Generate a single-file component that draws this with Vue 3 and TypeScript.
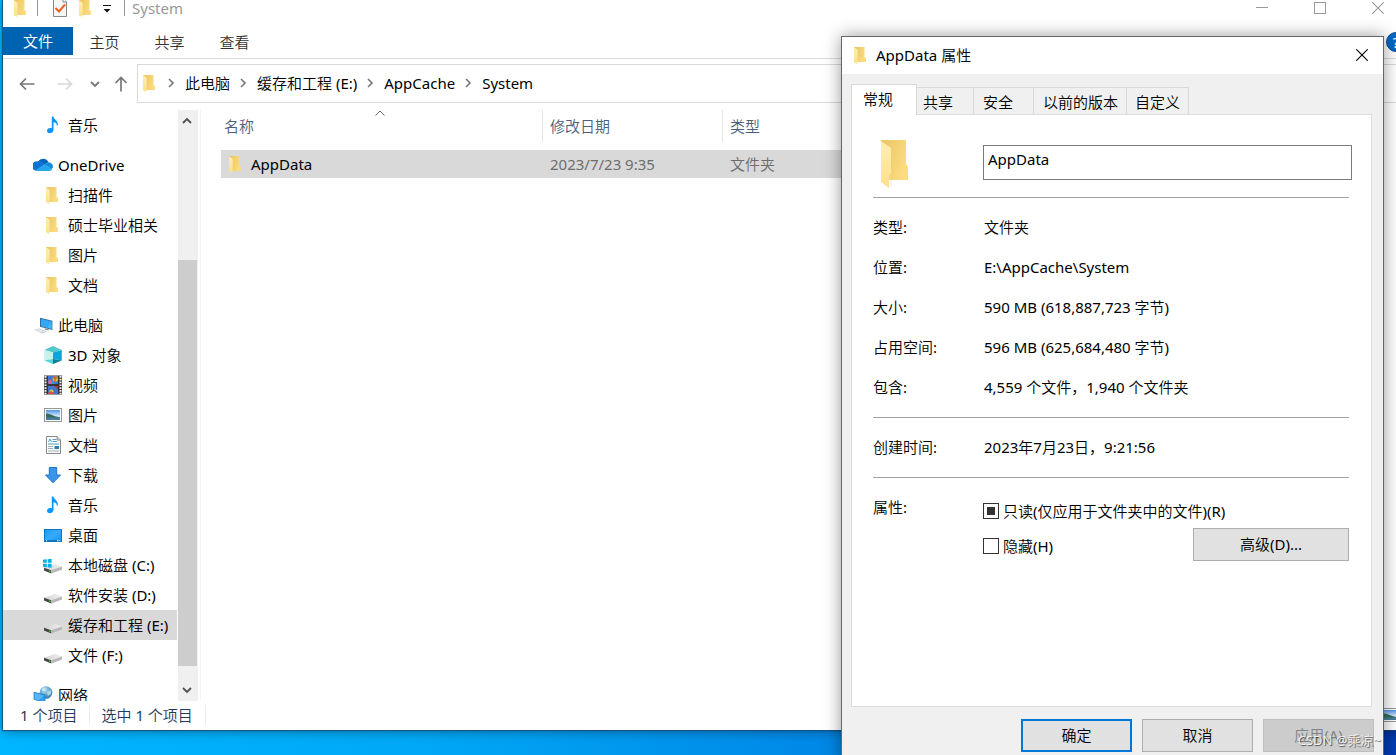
<script setup lang="ts">
import { ref } from 'vue'

interface TreeItem {
  label: string
  icon: string
  root?: boolean
  selected?: boolean
}

const groups: TreeItem[][] = [
  [{ label: '音乐', icon: 'music' }],
  [
    { label: 'OneDrive', icon: 'cloud', root: true },
    { label: '扫描件', icon: 'folder' },
    { label: '硕士毕业相关', icon: 'folder' },
    { label: '图片', icon: 'folder' },
    { label: '文档', icon: 'folder' },
  ],
  [
    { label: '此电脑', icon: 'pc', root: true },
    { label: '3D 对象', icon: 'cube' },
    { label: '视频', icon: 'film' },
    { label: '图片', icon: 'picture' },
    { label: '文档', icon: 'document' },
    { label: '下载', icon: 'download' },
    { label: '音乐', icon: 'music' },
    { label: '桌面', icon: 'desktop' },
    { label: '本地磁盘 (C:)', icon: 'sysdisk' },
    { label: '软件安装 (D:)', icon: 'disk' },
    { label: '缓存和工程 (E:)', icon: 'disk', selected: true },
    { label: '文件 (F:)', icon: 'disk' },
  ],
  [{ label: '网络', icon: 'network', root: true }],
]

const crumbs = ['此电脑', '缓存和工程 (E:)', 'AppCache', 'System']
const ribbon = ['主页', '共享', '查看']
const tabs = ['常规', '共享', '安全', '以前的版本', '自定义']

const facts = [
  { term: '类型:', value: '文件夹' },
  { term: '位置:', value: 'E:\\AppCache\\System' },
  { term: '大小:', value: '590 MB (618,887,723 字节)' },
  { term: '占用空间:', value: '596 MB (625,684,480 字节)' },
  { term: '包含:', value: '4,559 个文件，1,940 个文件夹' },
]

const folderName = ref('AppData')
const hidden = ref(false)
</script>

<template>
  <div class="screen">
    <svg class="sprite" aria-hidden="true">
      <defs>
        <linearGradient id="gBack" x1="0" x2="1" y1="0" y2="0.4">
          <stop offset="0" stop-color="#e9c463" />
          <stop offset="1" stop-color="#fbdc80" />
        </linearGradient>
        <linearGradient id="gFlap" x1="0" x2="0" y1="0" y2="1">
          <stop offset="0" stop-color="#ffeeb5" />
          <stop offset="1" stop-color="#ffe08a" />
        </linearGradient>
        <linearGradient id="gScreen" x1="0" x2="1" y1="0" y2="1">
          <stop offset="0" stop-color="#1c9bf3" />
          <stop offset="0.5" stop-color="#36abfa" />
          <stop offset="1" stop-color="#1593ee" />
        </linearGradient>
        <linearGradient id="gSky" x1="0" x2="0" y1="0" y2="1">
          <stop offset="0" stop-color="#4f93e8" />
          <stop offset="0.6" stop-color="#d5ecfa" />
          <stop offset="1" stop-color="#7fb2cf" />
        </linearGradient>
        <linearGradient id="gDisk" x1="0" x2="1" y1="0" y2="0">
          <stop offset="0" stop-color="#d3d3d5" />
          <stop offset="1" stop-color="#f0f0f1" />
        </linearGradient>
        <radialGradient id="gGlobe" cx="0.4" cy="0.3" r="0.8">
          <stop offset="0" stop-color="#b9dff1" />
          <stop offset="0.6" stop-color="#4f9cc9" />
          <stop offset="1" stop-color="#2e6d9d" />
        </radialGradient>
      </defs>
      <symbol id="folder" viewBox="0 0 20 20">
        <path d="M3 2H13.5V12L15 13V17H6L3 16Z" fill="url(#gBack)" />
        <path d="M3 2.3L6.7 5V16L6 19L3 17.3Z" fill="url(#gFlap)" />
      </symbol>
      <symbol id="bigfolder" viewBox="0 0 32 50">
        <path d="M2 1H27V25L29 28V41H10L2 40Z" fill="url(#gBack)" />
        <path d="M2 2L12 9V35L10 37V49L2 43Z" fill="url(#gFlap)" />
        <path d="M10 49L12 46V36" fill="none" stroke="#f1d99a" stroke-width="1" opacity=".5" />
      </symbol>
      <symbol id="music" viewBox="0 0 20 20">
        <path d="M8.8 1.5H10.5C10.8 5 15.5 5.3 14.8 10.5H13.7C14 8 12 7.6 10.5 7.3V14.8C10.5 17 8.6 18.2 6.8 18.2C5.1 18.2 4 17.2 4 15.8C4 13.8 6.2 12.5 8.8 13.3Z" fill="#0b95f8" />
      </symbol>
      <symbol id="cloud" viewBox="0 0 20 20">
        <path d="M5 6.5A6 6 0 0 1 15.5 7L10 11Z" fill="#0765b7" />
        <path d="M2.5 15.5A4.6 4.6 0 0 1 4.8 6.4C6.3 5.7 8 6.2 9.3 7L13 9.3L3 16Z" fill="#0c74d0" />
        <path d="M12 9L15.3 7.2A4.5 4.5 0 0 1 19.7 13L15 14Z" fill="#1789d8" />
        <path d="M2.3 15.2L11.3 9.2L19.4 13.5C18.9 15.2 17.7 16 16 16H4.5C3.6 16 2.9 15.7 2.3 15.2Z" fill="#27a5ec" />
      </symbol>
      <symbol id="pc" viewBox="0 0 20 20">
        <path d="M7 2.8L19.4 5.7V15L7 11.7Z" fill="#356b98" />
        <path d="M8 4L18.7 6.5V14L8 11Z" fill="#45b6fb" />
        <path d="M8 4L18.7 6.5L14 12.5L8 11Z" fill="#2699ec" opacity=".55" />
        <path d="M1 14.8L6.2 13.5L14.5 16.4L9.2 18.4Z" fill="#c4cbd3" />
        <path d="M2.7 14.8L10.2 17.2M4.5 14.2L12 16.7M5.5 16.5L9 14.7" stroke="#f2f4f6" stroke-width=".7" />
        <path d="M12 13.2L15.7 14.2V15.5L11.4 14.6Z" fill="#81909c" />
      </symbol>
      <symbol id="cube" viewBox="0 0 20 20">
        <path d="M1.2 5L10 1L18.8 5L10 7.5Z" fill="#51c8cc" />
        <path d="M1.2 5L10 7.5V14L1.2 15.5Z" fill="#c5f1f1" />
        <path d="M18.8 5L10 7.5V14L18.8 15.5Z" fill="#0aa8d7" />
        <path d="M1.2 15.5L10 14V19Z" fill="#53d5d7" />
        <path d="M18.8 15.5L10 14V19Z" fill="#087d9c" />
      </symbol>
      <symbol id="film" viewBox="0 0 20 20">
        <rect x="1" y="0.5" width="18" height="19" fill="#393533" />
        <path d="M2.5 1V19M17.5 1V19" stroke="#f5f1ec" stroke-width="2" stroke-dasharray="1.7 1.1" />
        <path d="M5 1H15V9H5ZM5 11H15V19H5Z" fill="#3e77d3" />
        <circle cx="12.3" cy="4" r="2.8" fill="#d8bd24" />
        <path d="M10 3H14.5M12 1V7" stroke="#cc4934" stroke-width="1" />
        <circle cx="7.2" cy="7" r="2" fill="#ed619a" />
        <path d="M8 9L10 6L12 9Z" fill="#2da5aa" />
        <path d="M11 11H15V15Z" fill="#b63630" />
        <circle cx="8.5" cy="16.5" r="2" fill="#e6cc32" />
        <path d="M5 18L8 16L12 19H5Z" fill="#d85245" />
      </symbol>
      <symbol id="picture" viewBox="0 0 20 20">
        <rect x="1.5" y="3.5" width="17" height="13" fill="#fff" stroke="#969696" />
        <rect x="3" y="5" width="14" height="10" fill="url(#gSky)" />
        <path d="M3 8.5C6 8 8.5 10.5 17 12.5V13H3Z" fill="#376c59" />
        <path d="M3 12.5H17V15H3Z" fill="#477e9c" />
      </symbol>
      <symbol id="document" viewBox="0 0 20 20">
        <path d="M3.5 1.5H14L17.5 5V18.5H3.5Z" fill="#fbfbfb" stroke="#888" />
        <path d="M14 1.5V5H17.5" fill="#d6d6d6" stroke="#888" />
        <path d="M5.5 7L7 4L8.5 7M9.5 4.5H13M9.5 6.5H14" fill="none" stroke="#3b97cd" stroke-width=".9" />
        <path d="M5 9H16" stroke="#4c9fb4" stroke-width="1" />
        <path d="M5 11.5H10M5 13.5H10M5 16H16" stroke="#9fb0b6" stroke-width="1" />
        <rect x="11.5" y="11" width="4.5" height="3" fill="#287fb6" />
      </symbol>
      <symbol id="download" viewBox="0 0 20 20">
        <path d="M6.3 2.5H13.7V10H17.5L10 17.8L2.5 10H6.3Z" fill="#3995ea" stroke="#2076c7" />
      </symbol>
      <symbol id="desktop" viewBox="0 0 20 20">
        <rect x="1.5" y="4.5" width="17" height="12" fill="url(#gScreen)" stroke="#1177bd" />
        <path d="M2 15.7H18" stroke="#0b69ad" stroke-width="1" />
        <path d="M3 15.7H4M14 15.7H15.5M16.3 15.7H17.3" stroke="#fff" stroke-width="1" />
      </symbol>
      <symbol id="disk" viewBox="0 0 20 20">
        <path d="M1 12.8L12 9L19 11.6L8.3 15.5Z" fill="url(#gDisk)" />
        <path d="M1 12.8L8.3 15.3V18.4L1 15.6Z" fill="#454545" />
        <path d="M8.3 15.3L19 11.6V14.6L8.3 18.4Z" fill="#b7b7ba" />
        <path d="M6.1 15.3L7.5 15.8V17L6.1 16.5Z" fill="#37e145" />
      </symbol>
      <symbol id="sysdisk" viewBox="0 0 20 20">
        <use href="#disk" width="20" height="20" />
        <path d="M0 4.8L3.8 4.3V7.8H0ZM4.7 4.2L8.6 3.7V7.8H4.7ZM0 8.7H3.8V12.2L0 11.7ZM4.7 8.7H8.6V12.8L4.7 12.3Z" fill="#08afe8" />
      </symbol>
      <symbol id="network" viewBox="0 0 20 20">
        <circle cx="13" cy="7.5" r="6.3" fill="url(#gGlobe)" />
        <path d="M9 4C11 1 14 3 12 5C10 8 9 5 9 4ZM14 7L18 5V9L15 11Z" fill="#d8eff8" opacity=".65" />
        <path d="M1 7.3L12 10V17.5L1 14.3Z" fill="#2f9eef" stroke="#2576b5" stroke-width=".8" />
        <path d="M1.5 8L11 10.4L6 15.2L1.5 14Z" fill="#67c6ff" opacity=".65" />
      </symbol>
      <symbol id="right" viewBox="0 0 10 10">
        <path d="M3 1L7 5L3 9" fill="none" stroke="#767676" stroke-width="1.6" />
      </symbol>
      <symbol id="up" viewBox="0 0 10 10">
        <path d="M1 7L5 3L9 7" fill="none" stroke="currentColor" stroke-width="1.8" />
      </symbol>
      <symbol id="down" viewBox="0 0 10 10">
        <path d="M1 3L5 7L9 3" fill="none" stroke="currentColor" stroke-width="1.8" />
      </symbol>
      <symbol id="close" viewBox="0 0 12 12">
        <path d="M0.3 0.3L11.7 11.7M11.7 0.3L0.3 11.7" fill="none" stroke="currentColor" stroke-width="1.1" />
      </symbol>
    </svg>

    <main class="explorer">
      <header class="titlebar">
        <svg class="icon"><use href="#folder" /></svg>
        <span class="divider"></span>
        <button class="quick" aria-label="属性">
          <svg width="20" height="20" viewBox="0 0 20 20">
            <path d="M3.5 0.5H13L16.5 4V18.5H3.5Z" fill="#f6f6f6" stroke="#85878b" />
            <path d="M13 0.5V4H16.5" fill="#fff" stroke="#85878b" />
            <path d="M5.5 10L9 13.5L15 6.5" fill="none" stroke="#ee6022" stroke-width="2" />
          </svg>
        </button>
        <button class="quick" aria-label="新建文件夹"><svg class="icon"><use href="#folder" /></svg></button>
        <button class="quick menu" aria-label="自定义快速访问工具栏">
          <svg width="10" height="10" viewBox="0 0 10 10"><path d="M1 2.5H9" stroke="#111" /><path d="M1.5 6H8.5L5 9.5Z" fill="#111" /></svg>
        </button>
        <span class="divider"></span>
        <span class="caption">System</span>
        <div class="controls">
          <button aria-label="最小化"><svg width="12" height="12" viewBox="0 0 12 12"><path d="M0 5.5H12" stroke="currentColor" /></svg></button>
          <button aria-label="最大化"><svg width="12" height="12" viewBox="0 0 12 12"><rect x="0.5" y="0.5" width="11" height="11" fill="none" stroke="currentColor" /></svg></button>
          <button aria-label="关闭"><svg width="12" height="12"><use href="#close" /></svg></button>
        </div>
      </header>

      <nav class="ribbon">
        <button class="file">文件</button>
        <button v-for="name in ribbon" :key="name">{{ name }}</button>
        <button class="help" aria-label="帮助">?</button>
      </nav>

      <div class="navrow">
        <div class="arrows">
          <button aria-label="后退">
            <svg width="16" height="16" viewBox="0 0 16 16"><path d="M15.5 8H1.5M7 2.5L1.5 8L7 13.5" fill="none" stroke="#777" stroke-width="1.7" /></svg>
          </button>
          <button aria-label="前进">
            <svg width="16" height="16" viewBox="0 0 16 16"><path d="M0.5 8H14.5M9 2.5L14.5 8L9 13.5" fill="none" stroke="#d8d8d8" stroke-width="1.7" /></svg>
          </button>
          <button class="slim" aria-label="最近浏览的位置"><svg width="10" height="10"><use href="#down" /></svg></button>
          <button class="slim" aria-label="上移">
            <svg width="16" height="16" viewBox="0 0 16 16"><path d="M8 15.5V1.5M2.5 7L8 1.5L13.5 7" fill="none" stroke="#777" stroke-width="1.7" /></svg>
          </button>
        </div>
        <div class="address">
          <svg class="icon"><use href="#folder" /></svg>
          <template v-for="crumb in crumbs" :key="crumb">
            <svg class="chevron"><use href="#right" /></svg>
            <a href="#">{{ crumb }}</a>
          </template>
        </div>
      </div>

      <div class="content">
        <aside class="tree">
          <ul v-for="(group, g) in groups" :key="g">
            <li v-for="item in group" :key="item.label">
              <a href="#" :class="{ root: item.root, selected: item.selected }">
                <svg class="icon"><use :href="'#' + item.icon" /></svg>
                <span>{{ item.label }}</span>
              </a>
            </li>
          </ul>
        </aside>
        <div class="scrollbar">
          <button aria-label="向上滚动"><svg width="10" height="10"><use href="#up" /></svg></button>
          <div class="track"><div class="thumb"></div></div>
          <button aria-label="向下滚动"><svg width="10" height="10"><use href="#down" /></svg></button>
        </div>
        <section class="files">
          <table>
            <thead>
              <tr>
                <th class="name">
                  名称
                  <svg class="sort" viewBox="0 0 10 6"><path d="M0.5 5.5L5 1L9.5 5.5" fill="none" stroke="#666" /></svg>
                </th>
                <th class="date">修改日期</th>
                <th>类型</th>
              </tr>
            </thead>
            <tbody>
              <tr>
                <td class="name"><div class="entry"><svg class="icon"><use href="#folder" /></svg>AppData</div></td>
                <td>2023/7/23 9:35</td>
                <td>文件夹</td>
              </tr>
            </tbody>
          </table>
        </section>
      </div>

      <footer class="status">
        <span>1 个项目</span>
        <span>选中 1 个项目</span>
        <button aria-label="大图标"><svg class="icon"><use href="#picture" /></svg></button>
      </footer>
    </main>

    <section class="dialog" role="dialog" aria-label="AppData 属性">
      <header class="dialog-title">
        <svg class="icon"><use href="#folder" /></svg>
        <span>AppData 属性</span>
        <button aria-label="关闭"><svg width="12" height="12"><use href="#close" /></svg></button>
      </header>

      <div class="dialog-body">
        <div class="tabs" role="tablist">
          <button v-for="(tab, i) in tabs" :key="tab" role="tab" :aria-selected="i === 0" :class="{ active: i === 0 }">{{ tab }}</button>
        </div>
        <div class="page" role="tabpanel">
          <div class="row naming">
            <svg class="bigfolder"><use href="#bigfolder" /></svg>
            <input v-model="folderName" type="text" aria-label="名称" />
          </div>
          <dl>
            <div v-for="fact in facts" :key="fact.term" class="row">
              <dt>{{ fact.term }}</dt>
              <dd>{{ fact.value }}</dd>
            </div>
          </dl>
          <dl>
            <div class="row">
              <dt>创建时间:</dt>
              <dd>2023年7月23日，9:21:56</dd>
            </div>
          </dl>
          <div class="row attributes">
            <span class="term">属性:</span>
            <div class="options">
              <label><input type="checkbox" :indeterminate.prop="true" />只读(仅应用于文件夹中的文件)(R)</label>
              <div class="pair">
                <label><input v-model="hidden" type="checkbox" />隐藏(H)</label>
                <button class="push advanced">高级(D)...</button>
              </div>
            </div>
          </div>
        </div>
        <footer class="actions">
          <button class="push primary">确定</button>
          <button class="push">取消</button>
          <button class="push" disabled>应用(A)</button>
        </footer>
      </div>
    </section>

    <span class="watermark">CSDN @乘凉~</span>
  </div>
</template>

<style>
body {
  margin: 0;
}
</style>

<style scoped>
* {
  box-sizing: border-box;
}

.screen {
  position: relative;
  display: flex;
  height: 100vh;
  padding: 0 0 25px 3px;
  overflow: hidden;
  background: linear-gradient(90deg, #00b6ff 0%, #00a8f6 30%, #0087e6 60%, #003bb5 98%);
  font: 15px/20px "Noto Sans", "Noto Sans CJK SC DemiLight", "Noto Sans CJK SC", sans-serif;
  color: #000;
}

.sprite {
  position: absolute;
  width: 0;
  height: 0;
}

button {
  margin: 0;
  padding: 0;
  border: 0;
  background: none;
  font: inherit;
  color: inherit;
}

button,
.icon {
  flex-shrink: 0;
}

svg {
  display: block;
}

a {
  color: inherit;
  text-decoration: none;
}

.icon {
  width: 20px;
  height: 20px;
}

/* Explorer window, running past the right edge of the screen */
.explorer {
  flex: 1;
  display: flex;
  flex-direction: column;
  min-width: 0;
  margin-right: -12px;
  background: #fff;
  box-shadow: 0 0 1px 1px rgba(20, 70, 110, 0.7), 0 2px 10px rgba(0, 0, 0, 0.35);
}

.titlebar {
  display: flex;
  align-items: center;
  height: 27px;
  padding: 0 1px 11px 8px;
}

.divider {
  width: 1px;
  height: 16px;
  margin: 0 12px 0 6px;
  background: #999;
}

.quick {
  margin-right: 6px;
}

.quick.menu {
  margin: 0 6px 0 0;
}

.titlebar .menu + .divider {
  margin-right: 7px;
}

.caption {
  color: #999;
}

.controls {
  display: flex;
  margin-left: auto;
  color: #999;
}

.controls button {
  display: flex;
  align-items: center;
  justify-content: center;
  width: 58px;
  height: 16px;
}

.ribbon {
  display: flex;
  height: 32px;
  padding-right: 2px;
  border-bottom: 1px solid #dadbdc;
  color: #333;
}

.ribbon button {
  width: 65px;
  height: 30px;
  padding-right: 2px;
}

.ribbon .file {
  width: 70px;
  height: 28px;
  padding: 0;
  background: #0063b1;
  color: #fff;
}

.ribbon .help {
  width: 20px;
  height: 20px;
  margin: 5px 0 0 auto;
  padding: 0;
  border: 1px solid #0a4c91;
  border-radius: 50%;
  background: #0069c5;
  color: #fff;
  line-height: 18px;
}

.navrow {
  display: flex;
  padding: 5px 0 7px;
}

.arrows {
  display: flex;
  align-items: center;
  width: 134px;
  padding-left: 16px;
  color: #777;
}

.arrows button {
  width: 16px;
  margin-right: 22px;
}

.arrows .slim {
  display: flex;
  justify-content: center;
  margin: 0 10px 0 -8px;
}

.arrows .slim + .slim {
  margin: 0;
}

.address {
  flex: 1;
  display: flex;
  align-items: center;
  height: 39px;
  padding: 0 0 1px 2px;
  border: 1px solid #d9d9d9;
}

.address .icon {
  margin-right: -2px;
}

.chevron {
  width: 10px;
  height: 10px;
  margin: 0 9px 0 8px;
}

.content {
  flex: 1;
  display: flex;
  min-height: 0;
}

.tree {
  width: 175px;
  overflow: hidden;
}

.tree ul {
  margin: 0 0 10px;
  padding: 0;
  list-style: none;
}

.tree a {
  display: flex;
  align-items: center;
  gap: 5px;
  height: 30px;
  margin-right: 1px;
  padding-left: 40px;
  white-space: nowrap;
}

.tree .root {
  padding-left: 30px;
}

.tree .selected {
  background: #d9d9d9;
}

.scrollbar {
  display: flex;
  flex-direction: column;
  width: 20px;
  background: #f0f0f0;
  color: #505050;
}

.scrollbar button {
  display: flex;
  align-items: center;
  justify-content: center;
  height: 22px;
  padding-right: 2px;
}

.track {
  flex: 1;
  display: flex;
  flex-direction: column;
  justify-content: flex-end;
  padding-bottom: 13px;
}

.thumb {
  width: 19px;
  height: 76%;
  background: #cdcdcd;
}

.files {
  flex: 1;
  margin-left: 2px;
  padding: 0 30px 0 20px;
  border-left: 1px solid #f4f4f4;
}

table {
  width: 100%;
  border-spacing: 0;
  table-layout: fixed;
}

tbody::before {
  content: "";
  display: block;
  height: 8px;
}

th {
  position: relative;
  height: 32px;
  padding: 0 0 0 7px;
  border-left: 1px solid #e5e5e5;
  color: #4c607a;
  font-weight: normal;
  text-align: left;
}

th.name {
  width: 321px;
  padding-left: 3px;
  border: 0;
}

th.date {
  width: 180px;
}

.sort {
  position: absolute;
  top: 0;
  left: 50%;
  width: 10px;
  height: 6px;
  margin-left: -7px;
}

td {
  height: 28px;
  padding: 0 0 0 8px;
  background: #d9d9d9;
  color: #6d6d6d;
}

td.name {
  padding-left: 5px;
  color: #000;
}

.entry {
  display: flex;
  align-items: center;
  gap: 5px;
}

.status {
  display: flex;
  align-items: center;
  height: 29px;
  padding: 0 7px 2px 6px;
  color: #1e395b;
}

.status span {
  padding: 0 12px 0 11px;
  border-right: 1px solid #ececec;
}

.status button {
  margin-left: auto;
}

/* Properties dialog floating above the explorer window */
.dialog {
  position: absolute;
  top: 36px;
  right: 12px;
  bottom: -10px;
  left: 841px;
  display: flex;
  flex-direction: column;
  border: 1px solid #666;
  background: #f0f0f0;
  box-shadow: 0 0 16px rgba(0, 0, 0, 0.4);
}

.dialog-title {
  display: flex;
  align-items: center;
  gap: 5px;
  height: 37px;
  padding: 0 15px 2px 9px;
  background: #fff;
}

.dialog-title button {
  margin-left: auto;
}

.dialog-body {
  flex: 1;
  display: flex;
  flex-direction: column;
  padding: 10px 11px 12px 9px;
}

.tabs {
  display: flex;
  align-items: flex-end;
}

.tabs button {
  height: 27px;
  padding: 2px 8px 0;
  border: 1px solid #d9d9d9;
  border-width: 1px 1px 0 0;
  text-align: left;
}

.tabs button:nth-child(2) {
  min-width: 57px;
  padding-left: 6px;
}

.tabs button:nth-child(3) {
  min-width: 60px;
  padding-left: 9px;
}

.tabs button:nth-child(4) {
  min-width: 93px;
  padding-left: 9px;
}

.tabs button:nth-child(5) {
  min-width: 61px;
}

.tabs .active {
  z-index: 1;
  width: 66px;
  height: 31px;
  margin-bottom: -1px;
  padding: 0 11px 2px;
  border-width: 1px 1px 0;
  background: #fff;
}

.page {
  flex: 1;
  padding: 0 22px 0 21px;
  border: 1px solid #dcdcdc;
  background: #fff;
}

.row {
  display: grid;
  grid-template-columns: 110px 1fr;
  align-items: center;
  min-height: 40px;
}

.naming {
  height: 83px;
  padding-bottom: 13px;
  border-bottom: 1px solid #a0a0a0;
  align-items: end;
}

.bigfolder {
  width: 32px;
  height: 50px;
  margin: 0 0 -5px 6px;
}

.naming input {
  height: 35px;
  margin: 0 -3px 4px 0;
  padding: 0 4px 8px;
  border: 1px solid #7a7a7a;
  outline: 0;
  font: inherit;
}

dl {
  margin: 0;
  padding: 9px 0 10px;
  border-bottom: 1px solid #a0a0a0;
}

dd {
  margin: 0;
  padding-left: 1px;
}

.attributes {
  align-items: start;
  padding-top: 9px;
}

.term {
  line-height: 40px;
}

.options {
  padding-top: 6px;
}

.pair {
  display: flex;
  justify-content: space-between;
}

label {
  display: flex;
  align-items: center;
  gap: 4px;
  height: 35px;
}

input[type="checkbox"] {
  width: 16px;
  height: 16px;
  margin: 0;
  padding: 3px;
  border: 1px solid #333;
  background: #fff content-box;
  appearance: none;
}

input[type="checkbox"]:indeterminate,
input[type="checkbox"]:checked {
  background-color: #333;
}

.push {
  width: 111px;
  height: 33px;
  padding-bottom: 2px;
  border: 1px solid #adadad;
  background: #e1e1e1;
}

.advanced {
  width: 156px;
}

.primary {
  border: 2px solid #0078d7;
}

.push:disabled {
  border-color: #bfbfbf;
  background: #ccc;
  color: #838383;
}

.actions {
  display: flex;
  justify-content: flex-end;
  gap: 10px;
  margin-right: -2px;
  padding-top: 12px;
}

.watermark {
  position: absolute;
  right: 15px;
  bottom: 5px;
  color: rgba(255, 255, 255, 0.85);
  font-size: 13px;
  text-shadow: 1px 1px 1px rgba(0, 0, 0, 0.6);
}
</style>
